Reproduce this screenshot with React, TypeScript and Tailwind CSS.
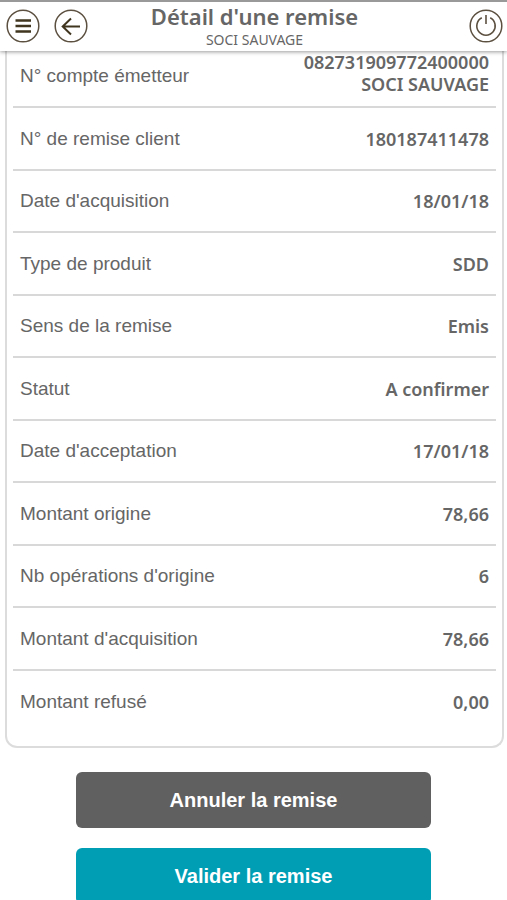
import React from "react";

type Detail = { label: string; values: string[] };

const details: Detail[] = [
  { label: "N° compte émetteur", values: ["082731909772400000", "SOCI SAUVAGE"] },
  { label: "N° de remise client", values: ["180187411478"] },
  { label: "Date d'acquisition", values: ["18/01/18"] },
  { label: "Type de produit", values: ["SDD"] },
  { label: "Sens de la remise", values: ["Emis"] },
  { label: "Statut", values: ["A confirmer"] },
  { label: "Date d'acceptation", values: ["17/01/18"] },
  { label: "Montant origine", values: ["78,66"] },
  { label: "Nb opérations d'origine", values: ["6"] },
  { label: "Montant d'acquisition", values: ["78,66"] },
  { label: "Montant refusé", values: ["0,00"] },
];

function IconButton({ label, children }: { label: string; children: React.ReactNode }) {
  return (
    <button type="button" aria-label={label} className="size-[34px] shrink-0 text-[#5c5040]">
      <svg viewBox="0 0 34 34" className="size-full" fill="none" stroke="currentColor">
        <circle cx="17" cy="17" r="15.8" strokeWidth="1.5" />
        {children}
      </svg>
    </button>
  );
}

export default function App() {
  return (
    <div className="flex h-screen flex-col overflow-hidden bg-white font-['Liberation_Sans',Arial,sans-serif] text-[#666]">
      <header className="z-10 grid shrink-0 grid-cols-[1fr_auto_1fr] items-center border-t-2 border-[#999] bg-white pr-1 pl-1.5 shadow-[0_1px_4px_rgba(0,0,0,0.4)]">
        <div className="flex gap-3.5 pb-0.5">
          <IconButton label="Menu">
            <path d="M9.5 11.5h15.5M9.5 17h15.5M9.5 22.5h15.5" stroke="#40361f" strokeWidth="2.5" />
          </IconButton>
          <IconButton label="Retour">
            <path d="M26 17.5H9M17 9.5l-8.3 8 8.3 8" stroke="#40361f" strokeWidth="2" />
          </IconButton>
        </div>
        <div className="pb-0.5 text-center font-['Noto_Sans',sans-serif]">
          <h1 className="text-[22px] leading-[28px] font-semibold">Détail d'une remise</h1>
          <p className="text-sm leading-[19px]">SOCI SAUVAGE</p>
        </div>
        <div className="flex justify-end pb-0.5">
          <IconButton label="Déconnexion">
            <path d="M12.8 8.8a9.2 9.2 0 1 0 8.4 0" strokeWidth="1.6" />
            <path d="M17 6v9" strokeWidth="1.6" />
          </IconButton>
        </div>
      </header>

      <main className="-mt-2 min-h-0 flex-1 overflow-y-auto [scrollbar-width:none]">
        <section className="mr-[3px] ml-[5px] rounded-b-xl border-2 border-t-0 border-[#dcdcdc] px-1.5 pt-[3px] pb-[13px]">
          <dl>
            {details.map(({ label, values }) => (
              <div
                key={label}
                className="flex items-center justify-between border-b-2 border-[#d8d8d8] px-[7px] last:border-b-0 odd:h-[62px] even:h-[63px]"
              >
                <dt className="text-[19px] leading-[22px]">{label}</dt>
                <dd
                  className={`text-right font-['Noto_Sans',sans-serif] text-lg leading-[22px] font-semibold ${
                    values.length > 1 ? "pb-1.5" : ""
                  }`}
                >
                  {values.map((value) => (
                    <span key={value} className="block">
                      {value}
                    </span>
                  ))}
                </dd>
              </div>
            ))}
          </dl>
        </section>

        <div className="mx-auto flex w-[70%] flex-col gap-5 pt-6 text-xl font-bold text-white">
          <button type="button" className="h-14 rounded-md bg-[#606060]">
            Annuler la remise
          </button>
          <button type="button" className="h-14 rounded-md bg-[#009eb5]">
            Valider la remise
          </button>
        </div>
      </main>
    </div>
  );
}
